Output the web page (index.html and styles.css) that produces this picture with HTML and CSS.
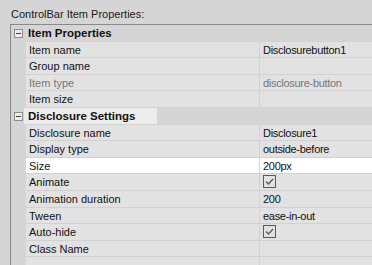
FILE: index.html
```html
<!DOCTYPE html>
<html>
<head>
<meta charset="utf-8">
<link rel="stylesheet" href="styles.css">
</head>
<body>
<div class="title">ControlBar Item Properties:</div>
<div class="grid">
  <div class="row header">
    <div class="gutter"><span class="toggle"></span></div>
    <div class="cells"><div class="hlabel">Item Properties</div></div>
  </div>
  <div class="row">
    <div class="gutter"></div>
    <div class="cells"><div class="label">Item name</div><div class="value">Disclosurebutton1</div></div>
  </div>
  <div class="row">
    <div class="gutter"></div>
    <div class="cells"><div class="label">Group name</div><div class="value"></div></div>
  </div>
  <div class="row disabled">
    <div class="gutter"></div>
    <div class="cells"><div class="label">Item type</div><div class="value">disclosure-button</div></div>
  </div>
  <div class="row">
    <div class="gutter"></div>
    <div class="cells"><div class="label">Item size</div><div class="value"></div></div>
  </div>
  <div class="row header">
    <div class="gutter"><span class="toggle"></span></div>
    <div class="cells"><div class="hlabel focus">Disclosure Settings</div></div>
  </div>
  <div class="row">
    <div class="gutter"></div>
    <div class="cells"><div class="label">Disclosure name</div><div class="value">Disclosure1</div></div>
  </div>
  <div class="row">
    <div class="gutter"></div>
    <div class="cells"><div class="label">Display type</div><div class="value">outside-before</div></div>
  </div>
  <div class="row selected">
    <div class="gutter"></div>
    <div class="cells"><div class="label">Size</div><div class="value">200px</div></div>
  </div>
  <div class="row">
    <div class="gutter"></div>
    <div class="cells"><div class="label">Animate</div><div class="value"><span class="check"><svg width="11" height="11" viewBox="0 0 11 11"><path d="M2 5.5 L4.5 8 L9 3" fill="none" stroke="#5a5a5a" stroke-width="1.3"/></svg></span></div></div>
  </div>
  <div class="row">
    <div class="gutter"></div>
    <div class="cells"><div class="label">Animation duration</div><div class="value">200</div></div>
  </div>
  <div class="row">
    <div class="gutter"></div>
    <div class="cells"><div class="label">Tween</div><div class="value">ease-in-out</div></div>
  </div>
  <div class="row">
    <div class="gutter"></div>
    <div class="cells"><div class="label">Auto-hide</div><div class="value"><span class="check"><svg width="11" height="11" viewBox="0 0 11 11"><path d="M2 5.5 L4.5 8 L9 3" fill="none" stroke="#5a5a5a" stroke-width="1.3"/></svg></span></div></div>
  </div>
  <div class="row">
    <div class="gutter"></div>
    <div class="cells"><div class="label">Class Name</div><div class="value"></div></div>
  </div>
  <div class="row">
    <div class="gutter"></div>
    <div class="cells"><div class="label"></div><div class="value"></div></div>
  </div>
</div>
</body>
</html>
```
FILE: styles.css
```css
html, body {
  margin: 0;
  padding: 0;
  background: #d5d5d5;
  font-family: "Liberation Sans", Arial, sans-serif;
  font-size: 11px;
  color: #111;
  overflow: hidden;
  height: 265px;
}
.title {
  height: 24px;
  box-sizing: border-box;
  padding: 6px 0 0 11px;
  line-height: 16px;
  color: #1a1a1a;
}
.grid {
  margin-left: 10px;
  border-top: 1px solid #8a8a8a;
  border-left: 1px solid #8a8a8a;
}
.row {
  display: flex;
  height: 16.6px;
}
.gutter {
  width: 15px;
  flex: none;
  position: relative;
}
.cells {
  flex: 1;
  display: flex;
  border-bottom: 1px solid #d2d2d2;
  background: #e2e2e2;
}
.label {
  width: 230px;
  flex: none;
  padding-left: 3px;
  line-height: 16px;
  border-right: 1px solid #d2d2d2;
  white-space: nowrap;
}
.value {
  flex: 1;
  padding-left: 3px;
  line-height: 16px;
  white-space: nowrap;
  letter-spacing: -0.3px;
}
.header .cells {
  background: #d5d5d5;
}
.hlabel {
  font-weight: bold;
  font-size: 11.5px;
  line-height: 16px;
  padding-left: 4px;
  margin-left: -2px;
  width: 129px;
}
.hlabel.focus {
  background: #ececec;
}
.toggle {
  position: absolute;
  left: 3px;
  top: 4px;
  width: 7px;
  height: 7px;
  border: 1px solid #8d8d8d;
  background: #ececec;
}
.toggle::after {
  content: "";
  position: absolute;
  left: 1px;
  top: 3px;
  width: 5px;
  height: 1px;
  background: #404040;
}
.disabled .label, .disabled .value {
  color: #767676;
}
.selected .cells {
  background: #ffffff;
}
.check {
  display: inline-block;
  width: 11px;
  height: 11px;
  border: 1px solid #5a5a5a;
  vertical-align: top;
  margin-top: 1px;
}
.check svg {
  display: block;
}
```
